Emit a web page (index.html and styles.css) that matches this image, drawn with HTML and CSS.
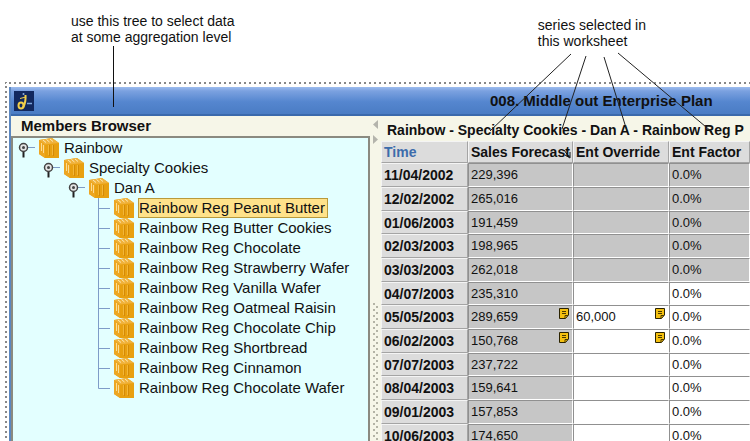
FILE: index.html
```html
<!DOCTYPE html>
<html lang="en">
<head>
    <meta charset="UTF-8">
    <title>Middle out Enterprise Plan</title>
    <link rel="stylesheet" href="styles.css">
</head>
<body>
    <svg width="0" height="0" class="defs">
        <symbol id="box" viewBox="0 0 20 20">
            <path d="M0 2 L13 0 L20 5 V20 H6 L0 16 Z" fill="#e8a010"/>
            <path d="M0 2 L13 0 L20 5 L6 6.500 Z" fill="#f0b23c"/>
            <path d="M0 2 L6 6.500 V20 L0 16 Z" fill="#eda622"/>
            <path d="M2.500 5 V13 M4.500 7 V15" stroke="#fbdc94"/>
            <path d="M4 2 L7 4.500 M7.500 1.500 L10.500 4 M11 1 L14 3.500" stroke="#fde9b8"/>
            <path d="M10.500 7 V18 M14.500 7 V18" stroke="#d48a06"/>
            <path d="M9.500 7 V17 M13.500 7 V17" stroke="#f3b739"/>
        </symbol>
        <symbol id="knob" viewBox="0 0 21 20">
            <path d="M9 9.500 H17" stroke="#7f9cc8"/>
            <path d="M5.500 13 V19.500" stroke="#222" stroke-width="2"/>
            <circle cx="5.500" cy="9.500" r="4" fill="#e4e4e4" stroke="#444" stroke-width="1.500"/>
            <circle cx="5.500" cy="9.500" r="1.500" fill="#444"/>
        </symbol>
        <symbol id="branch" viewBox="0 0 21 20">
            <path d="M5.500 0 V20 M5.500 10.500 H17" stroke="#7f9cc8" fill="none"/>
        </symbol>
        <symbol id="branch-end" viewBox="0 0 21 20">
            <path d="M5.500 0 V10.500 H17" stroke="#7f9cc8" fill="none"/>
        </symbol>
        <symbol id="memo" viewBox="0 0 10 11">
            <path d="M.5 .5 H9.500 V7 L6.500 10.500 H.5 Z" fill="#f4c010" stroke="#2a2200"/>
            <path d="M3 3.500 H7 M3 5.500 H7 M6 10 V7.500 H9" stroke="#4a3a00" fill="none"/>
        </symbol>
    </svg>

    <div class="page">
        <div class="notes">
            <p class="note note-tree">use this tree to select data<br>at some aggregation level</p>
            <p class="note note-series">series selected in<br>this worksheet</p>
        </div>

        <div class="frame">
            <div class="window">
                <header class="titlebar">
                    <svg class="logo" viewBox="0 0 20 20">
                        <rect width="20" height="20" fill="#12285e"/>
                        <ellipse cx="7" cy="14.500" rx="2.500" ry="3" fill="none" stroke="#f2cf4a" stroke-width="2"/>
                        <path d="M11.500 4 C12 9 11 13 9 17" fill="none" stroke="#f2cf4a" stroke-width="2"/>
                        <path d="M6 7.500 L12 6" stroke="#f2cf4a"/>
                        <path d="M13 12.500 H18" stroke="#7fa6dc" stroke-width="1.500"/>
                        <circle cx="9.500" cy="3" r="1" fill="#8fb0e0"/>
                    </svg>
                    <h1>008. Middle out Enterprise Plan</h1>
                </header>

                <div class="panes">
                    <section class="browser">
                        <h2>Members Browser</h2>
                        <div class="tree">
                            <ul>
                                <li>
                                    <div class="node"><button aria-label="Collapse Rainbow"><svg><use href="#knob"/></svg></button><svg class="icon"><use href="#box"/></svg><span>Rainbow</span></div>
                                    <ul>
                                        <li>
                                            <div class="node"><button aria-label="Collapse Specialty Cookies"><svg><use href="#knob"/></svg></button><svg class="icon"><use href="#box"/></svg><span>Specialty Cookies</span></div>
                                            <ul>
                                                <li>
                                                    <div class="node"><button aria-label="Collapse Dan A"><svg><use href="#knob"/></svg></button><svg class="icon"><use href="#box"/></svg><span>Dan A</span></div>
                                                    <ul>
                                                        <li class="node"><svg class="line"><use href="#branch"/></svg><svg class="icon"><use href="#box"/></svg><span class="selected">Rainbow Reg Peanut Butter</span></li>
                                                        <li class="node"><svg class="line"><use href="#branch"/></svg><svg class="icon"><use href="#box"/></svg><span>Rainbow Reg Butter Cookies</span></li>
                                                        <li class="node"><svg class="line"><use href="#branch"/></svg><svg class="icon"><use href="#box"/></svg><span>Rainbow Reg Chocolate</span></li>
                                                        <li class="node"><svg class="line"><use href="#branch"/></svg><svg class="icon"><use href="#box"/></svg><span>Rainbow Reg Strawberry Wafer</span></li>
                                                        <li class="node"><svg class="line"><use href="#branch"/></svg><svg class="icon"><use href="#box"/></svg><span>Rainbow Reg Vanilla Wafer</span></li>
                                                        <li class="node"><svg class="line"><use href="#branch"/></svg><svg class="icon"><use href="#box"/></svg><span>Rainbow Reg Oatmeal Raisin</span></li>
                                                        <li class="node"><svg class="line"><use href="#branch"/></svg><svg class="icon"><use href="#box"/></svg><span>Rainbow Reg Chocolate Chip</span></li>
                                                        <li class="node"><svg class="line"><use href="#branch"/></svg><svg class="icon"><use href="#box"/></svg><span>Rainbow Reg Shortbread</span></li>
                                                        <li class="node"><svg class="line"><use href="#branch"/></svg><svg class="icon"><use href="#box"/></svg><span>Rainbow Reg Cinnamon</span></li>
                                                        <li class="node"><svg class="line"><use href="#branch-end"/></svg><svg class="icon"><use href="#box"/></svg><span>Rainbow Reg Chocolate Wafer</span></li>
                                                    </ul>
                                                </li>
                                            </ul>
                                        </li>
                                    </ul>
                                </li>
                            </ul>
                        </div>
                    </section>

                    <div class="splitter">
                        <button aria-label="Collapse left"><svg viewBox="0 0 6 10"><path d="M5 0 V9 L0 4.500 Z" fill="#b4b4ac"/></svg></button>
                        <button aria-label="Collapse right"><svg viewBox="0 0 6 10"><path d="M0 0 V9 L5 4.500 Z" fill="#b4b4ac"/></svg></button>
                        <div class="grip"></div>
                    </div>

                    <section class="sheet">
                        <h2>Rainbow - Specialty Cookies - Dan A - Rainbow Reg P</h2>
                        <table>
                            <colgroup>
                                <col class="col-time">
                                <col class="col-sales">
                                <col class="col-override">
                                <col>
                            </colgroup>
                            <thead>
                                <tr><th class="time">Time</th><th>Sales Forecast</th><th>Ent Override</th><th>Ent Factor</th></tr>
                            </thead>
                            <tbody>
                                <tr class="past"><th>11/04/2002</th><td>229,396</td><td></td><td>0.0%</td></tr>
                                <tr class="past"><th>12/02/2002</th><td>265,016</td><td></td><td>0.0%</td></tr>
                                <tr class="past"><th>01/06/2003</th><td>191,459</td><td></td><td>0.0%</td></tr>
                                <tr class="past"><th>02/03/2003</th><td>198,965</td><td></td><td>0.0%</td></tr>
                                <tr class="past"><th>03/03/2003</th><td>262,018</td><td></td><td>0.0%</td></tr>
                                <tr><th>04/07/2003</th><td>235,310</td><td></td><td>0.0%</td></tr>
                                <tr><th>05/05/2003</th><td><svg class="memo"><use href="#memo"/></svg>289,659</td><td><svg class="memo"><use href="#memo"/></svg>60,000</td><td>0.0%</td></tr>
                                <tr><th>06/02/2003</th><td><svg class="memo"><use href="#memo"/></svg>150,768</td><td><svg class="memo"><use href="#memo"/></svg></td><td>0.0%</td></tr>
                                <tr><th>07/07/2003</th><td>237,722</td><td></td><td>0.0%</td></tr>
                                <tr><th>08/04/2003</th><td>159,641</td><td></td><td>0.0%</td></tr>
                                <tr><th>09/01/2003</th><td>157,853</td><td></td><td>0.0%</td></tr>
                                <tr><th>10/06/2003</th><td>174,650</td><td></td><td>0.0%</td></tr>
                            </tbody>
                        </table>
                    </section>
                </div>
            </div>
        </div>

        <!-- pointer lines from the notes into the window -->
        <svg class="pointers">
            <path d="M113.500 46 V107" stroke="#111"/>
            <path d="M571 54 L490 131 M586 56 L562 129 M604 57 L627 131 M618 53 L712 132" stroke="#222" fill="none"/>
            <path d="M564 150 L569 157 M570 152 V158 L565 155" stroke="#111" fill="none"/>
        </svg>
    </div>
</body>
</html>
```
FILE: styles.css
```css
* {
    box-sizing: border-box;
}
body {
    margin: 0;
    height: 100vh;
    overflow: hidden;
    background: #fff;
    color: #111;
    font-family: "Liberation Sans", Arial, sans-serif;
}
h1, h2, p, ul {
    margin: 0;
    padding: 0;
}
ul {
    list-style: none;
}
button {
    margin: 0;
    padding: 0;
    border: 0;
    background: none;
}
svg {
    display: block;
}
.defs {
    position: absolute;
}
.page {
    position: relative;
    display: flex;
    flex-direction: column;
    height: 100vh;
}
.pointers {
    position: absolute;
    top: 0;
    left: 0;
    width: 100%;
    height: 100%;
    pointer-events: none;
}

/* notes above the window */
.notes {
    display: flex;
    justify-content: space-between;
    height: 82px;
    padding: 13px 104px 0 71px;
}
.note {
    font-size: 14px;
    line-height: 16px;
}
.note-series {
    padding-top: 4px;
}

/* dotted outline and window */
.frame {
    flex: 1;
    min-height: 0;
    padding: 5px 0 0 4px;
    margin-left: 5px;
    background:
        linear-gradient(90deg, #888 2px, transparent 2px) 4px 0 / 5px 2px repeat-x,
        linear-gradient(#888 2px, transparent 2px) 0 4px / 2px 5px repeat-y;
}
.window {
    display: flex;
    flex-direction: column;
    height: 100%;
    border-left: 2px solid #5b87c0;
    background: #f6f6e8;
}
.titlebar {
    display: flex;
    align-items: center;
    gap: 456px;
    height: 29px;
    padding-left: 3px;
    border-bottom: 2px solid #3a69ac;
    background: linear-gradient(#9dbcee, #7ba1e0 15%, #5586cf 55%, #4a7cc4);
}
.logo {
    flex: none;
    width: 20px;
    height: 20px;
}
h1 {
    font-size: 15px;
    line-height: 20px;
    white-space: nowrap;
}
.panes {
    flex: 1;
    display: flex;
    min-height: 0;
}

/* members tree */
.browser {
    display: flex;
    flex-direction: column;
    width: 359px;
    flex: none;
}
.browser h2 {
    padding-left: 10px;
    font-size: 15px;
    line-height: 20px;
}
.tree {
    flex: 1;
    padding-left: 5px;
    border: 2px solid #8a8a80;
    border-bottom: 0;
    background: #e3ffff;
}
.tree ul ul {
    padding-left: 25px;
}
.node {
    display: flex;
    align-items: center;
    height: 20px;
    font-size: 15px;
    line-height: 18px;
    white-space: nowrap;
}
.node button svg,
.line {
    width: 21px;
    height: 20px;
}
.icon {
    width: 20px;
    height: 20px;
}
.node span {
    margin-left: 4px;
    padding: 0 2px 0 0;
    border: 1px solid transparent;
}
.node .selected {
    border-color: #b99a3c;
    background: #ffe28a;
}

/* splitter */
.splitter {
    display: flex;
    flex-direction: column;
    align-items: center;
    gap: 5px;
    width: 11px;
    flex: none;
    padding-top: 4px;
}
.splitter svg {
    width: 6px;
    height: 10px;
}
.grip {
    flex: 1;
    width: 6px;
    margin-top: 153px;
    background:
        radial-gradient(circle at 1px 1px, #b4b4a6 1px, transparent 1px) 0 0 / 6px 6px,
        radial-gradient(circle at 1px 1px, #b4b4a6 1px, transparent 1px) 3px 3px / 6px 6px;
}

/* worksheet */
.sheet {
    flex: 1;
    min-width: 0;
    overflow: hidden;
}
.sheet h2 {
    padding: 3px 0 0 6px;
    font-size: 14px;
    line-height: 22px;
    white-space: nowrap;
}
table {
    width: 100%;
    table-layout: fixed;
    border-collapse: separate;
    border-spacing: 0;
}
.col-time {
    width: 87px;
}
.col-sales {
    width: 105px;
}
.col-override {
    width: 96px;
}
th, td {
    height: 24px;
    padding: 0 0 0 2px;
    text-align: left;
    white-space: nowrap;
    line-height: 18px;
}
tbody tr:nth-child(3n) > * {
    height: 23px;
}
th {
    border: 1px solid #a4a4a4;
    border-top-color: #f4f4f4;
    border-left-color: #f4f4f4;
    background: #dcdcdc;
    font-size: 14px;
}
thead th {
    height: 22px;
}
.time {
    color: #3c6cab;
}
td {
    border: 1px solid #fff;
    border-top-color: #909090;
    border-left-color: #909090;
    background: #fff;
    font-size: 13px;
    line-height: 21px;
    vertical-align: top;
}
.past td,
td:nth-child(2) {
    background: #c6c6c6;
}
.memo {
    float: right;
    width: 10px;
    height: 11px;
    margin: 2px 3px 0 0;
}
```
